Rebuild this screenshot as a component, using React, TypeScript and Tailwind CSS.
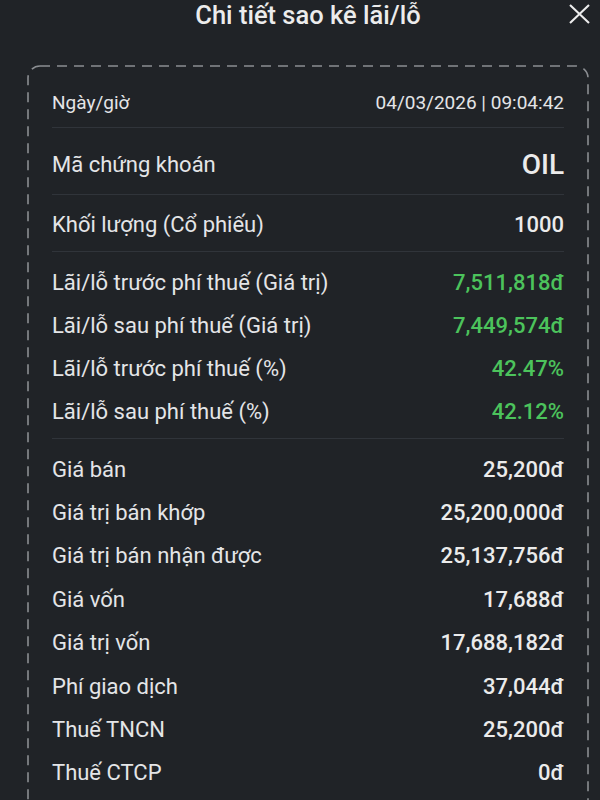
import React from "react";

type Row = { label: string; value: string; green?: boolean };

const pnl: Row[] = [
  { label: "Lãi/lỗ trước phí thuế (Giá trị)", value: "7,511,818đ", green: true },
  { label: "Lãi/lỗ sau phí thuế (Giá trị)", value: "7,449,574đ", green: true },
  { label: "Lãi/lỗ trước phí thuế (%)", value: "42.47%", green: true },
  { label: "Lãi/lỗ sau phí thuế (%)", value: "42.12%", green: true },
];

const details: Row[] = [
  { label: "Giá bán", value: "25,200đ" },
  { label: "Giá trị bán khớp", value: "25,200,000đ" },
  { label: "Giá trị bán nhận được", value: "25,137,756đ" },
  { label: "Giá vốn", value: "17,688đ" },
  { label: "Giá trị vốn", value: "17,688,182đ" },
  { label: "Phí giao dịch", value: "37,044đ" },
  { label: "Thuế TNCN", value: "25,200đ" },
  { label: "Thuế CTCP", value: "0đ" },
];

function Line({ r, h }: { r: Row; h: string }) {
  return (
    <div className={`flex items-center justify-between ${h}`}>
      <span className="text-[22px] leading-none text-[#e4e5e7]">{r.label}</span>
      <span
        className={`text-[22px] leading-none font-medium ${r.green ? "text-[#4cc35c]" : "text-[#ebebeb]"}`}
      >
        {r.value}
      </span>
    </div>
  );
}

export default function App() {
  return (
    <div
      className="w-[600px] h-[800px] overflow-hidden bg-[#202327] text-white"
      style={{ fontFamily: "Roboto, 'Noto Sans', sans-serif" }}
    >
      <div className="relative flex h-[31px] items-center justify-center pl-[16px]">
        <span className="text-[25.5px] leading-none font-medium text-[#ececec]">Chi tiết sao kê lãi/lỗ</span>
        <svg
          className="absolute left-[568px] top-[3px]"
          width="23"
          height="22"
          viewBox="0 0 23 22"
          fill="none"
          stroke="#ececec"
          strokeWidth="2.1"
        >
          <path d="M2 2 L21 20 M21 2 L2 20" />
        </svg>
      </div>

      <div className="ml-[27px] mt-[34px] w-[562px]">
        <div className="relative h-[800px] px-[25px] pt-[13px]">
          <svg className="pointer-events-none absolute inset-0" width="562" height="800">
            <rect
              x="1"
              y="1"
              width="560"
              height="798"
              rx="12"
              fill="none"
              stroke="#8b8e92"
              strokeWidth="1.6"
              strokeDasharray="10 7"
            />
          </svg>

          <div className="flex h-[50px] items-center justify-between border-b border-[#30343a]">
            <span className="text-[19px] leading-none text-[#e4e5e7]">Ngày/giờ</span>
            <span className="text-[19px] leading-none text-[#e4e5e7]">04/03/2026 | 09:04:42</span>
          </div>

          <div className="flex h-[67px] items-center justify-between border-b border-[#30343a] pt-[7px]">
            <span className="text-[22px] leading-none text-[#e4e5e7]">Mã chứng khoán</span>
            <span className="text-[28px] leading-none font-medium text-[#ebebeb]">OIL</span>
          </div>

          <div className="flex h-[57px] items-center justify-between border-b border-[#30343a] pt-[3px]">
            <span className="text-[22px] leading-none text-[#e4e5e7]">Khối lượng (Cổ phiếu)</span>
            <span className="text-[22px] leading-none font-medium text-[#ebebeb]">1000</span>
          </div>

          <div className="flex flex-col border-b border-[#30343a] pb-[5px] pt-[9px]">
            {pnl.map((r) => (
              <Line key={r.label} r={r} h="h-[43px]" />
            ))}
          </div>

          <div className="flex flex-col pt-[9px]">
            {details.map((r) => (
              <Line key={r.label} r={r} h="h-[43.4px]" />
            ))}
          </div>
        </div>
      </div>
    </div>
  );
}
